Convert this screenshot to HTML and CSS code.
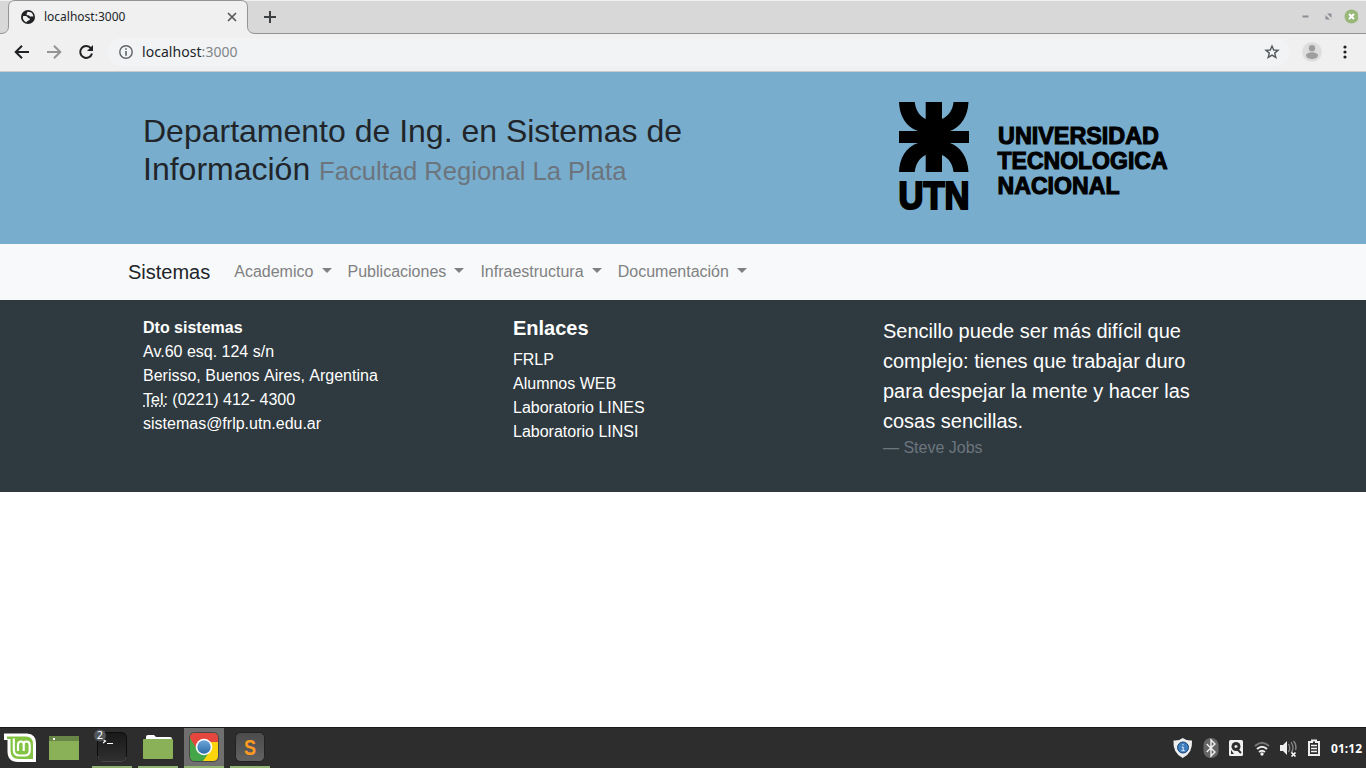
FILE: index.html
```html
<!DOCTYPE html>
<html lang="es">
<head>
<meta charset="utf-8">
<title>localhost:3000</title>
<link rel="stylesheet" href="styles.css">
</head>
<body>
<div class="browser">
  <div class="tabs">
    <svg class="tabshape" width="262" height="34" viewBox="0 0 262 34"><path d="M0 33.5C6 33.5 8.500 31 8.500 26V7Q8.500 .5 15 .5H241Q247.500 .5 247.500 7V26C247.500 31 250 33.500 256 33.500V34H0Z" fill="#f0f0f0"/><path d="M0 33.500C6 33.500 8.500 31 8.500 26V7Q8.500 .5 15 .5H241Q247.500 .5 247.500 7V26C247.500 31 250 33.500 256 33.500H262" fill="none" stroke="#949494"/></svg>
    <div class="tab">
      <svg width="14" height="14" viewBox="0 0 14 14"><circle cx="7" cy="7" r="7" fill="#202124"/><path d="M2 6.200C4 5.800 6 6 6.700 7.500C7 8.500 9 8 9 9.300C8 11 6 10.500 5.500 12.300C3.500 11.500 1.500 9.500 2 6.200ZM6.500 1.800L9.800 2.200C11.500 3 12.400 5 12.300 6.800L11 6.200L9.500 6.800L7.700 5.300L5.800 5.300L5.600 3.800Z" fill="#f0f0f0"/></svg>
      <span>localhost:3000</span>
      <svg class="close" width="10" height="10" viewBox="0 0 10 10"><path d="M1 1L9 9M9 1L1 9" stroke="#55585c" stroke-width="1.700"/></svg>
    </div>
    <svg class="plus" width="12" height="12" viewBox="0 0 12 12"><path d="M6 0V12M0 6H12" stroke="#3c4043" stroke-width="2"/></svg>
    <svg class="wincontrols" width="60" height="20" viewBox="0 0 60 20"><path d="M4.500 9.500H10.500" stroke="#8c8f96" stroke-width="2"/><path d="M29 6.500H33.500V11ZM27.500 8V12.500H32Z" fill="#8c8f96"/><path d="M27.500 6.500L33.500 12.500" stroke="#d8d8d8" stroke-width="1.200"/><circle cx="53.500" cy="9.500" r="7" fill="#97b878"/><path d="M51 7L56 12M56 7L51 12" stroke="#fff" stroke-width="2"/></svg>
  </div>
  <div class="toolbar">
    <svg class="navicons" width="94" height="24" viewBox="8 40 94 24"><g fill="none" stroke-width="2"><path d="M29 52H16M22 45.700L15.700 52L22 58.300" stroke="#202124"/><path d="M47 52H60M54 45.700L60.300 52L54 58.300" stroke="#949494"/><path d="M91 48.300A6 6 0 1 0 92 53.500" stroke="#202124"/></g><path d="M93 45V51H87Z" fill="#202124"/></svg>
    <div class="address">
      <svg width="14" height="14" viewBox="0 0 14 14"><circle cx="7" cy="7" r="6.200" fill="none" stroke="#5f6368" stroke-width="1.400"/><path d="M7 3.200V4.800M7 6V10.800" stroke="#5f6368" stroke-width="1.600"/></svg>
      <span class="host">localhost<span class="port">:3000</span></span>
      <svg class="star" width="16" height="16" viewBox="0 0 16 16"><path d="M8 2L9.700 6L14 6.300L10.700 9.100L11.800 13.400L8 11.100L4.200 13.400L5.300 9.100L2 6.300L6.300 6Z" fill="none" stroke="#55595e" stroke-width="1.400"/></svg>
    </div>
    <svg class="avatar" width="20" height="20" viewBox="0 0 20 20"><circle cx="10" cy="10" r="10" fill="#dedede"/><circle cx="10" cy="6.300" r="3.200" fill="#9e9e9e"/><ellipse cx="10" cy="13.600" rx="6" ry="3.300" fill="#9e9e9e"/></svg>
    <svg class="dots" width="4" height="14" viewBox="0 0 4 14"><g fill="#202124"><circle cx="2" cy="2" r="1.600"/><circle cx="2" cy="7" r="1.600"/><circle cx="2" cy="12" r="1.600"/></g></svg>
  </div>
</div>
<header class="masthead">
  <div class="container row">
    <div class="col-8"><h2>Departamento de Ing. en Sistemas de Información <small>Facultad Regional La Plata</small></h2></div>
    <div class="col-4">
      <svg class="logo" width="300" height="130" viewBox="883 90 300 130">
        <path d="M925.700 102H942V172H925.700ZM899 131H969V143H899Z"/>
        <path d="M899 102H914.700C915.500 109 919 116 925.700 119H942C949 116 953 109 953.500 102H968.500C968 116 961 127 950 131V143C961 147 968 158 968.500 172H953.500C953 165 949 158 942 155H925.700C919 158 915.500 165 914.700 172H899C899.500 158 906 147 918 143V131C906 127 899.500 116 899 102Z"/>
        <g class="logotext"><text class="utn" x="898.500" y="209" textLength="71" lengthAdjust="spacingAndGlyphs">UTN</text><text x="998" y="143.500" textLength="161" lengthAdjust="spacingAndGlyphs">UNIVERSIDAD</text><text x="997.500" y="168.500" textLength="170" lengthAdjust="spacingAndGlyphs">TECNOLOGICA</text><text x="997.500" y="193.500" textLength="122" lengthAdjust="spacingAndGlyphs">NACIONAL</text></g>
      </svg>
    </div>
  </div>
</header>
<nav class="navbar"><div class="container navrow"><a class="brand">Sistemas</a><a class="link">Academico</a><a class="link">Publicaciones</a><a class="link">Infraestructura</a><a class="link">Documentación</a></div></nav>
<footer class="footer">
  <div class="container row">
    <div class="col-4"><address><strong>Dto sistemas</strong><br>Av.60 esq. 124 s/n<br><span class="city">Berisso, Buenos Aires, Argentina</span><br><abbr title="Telefono">Tel:</abbr> (0221) 412- 4300<br>sistemas@frlp.utn.edu.ar</address></div>
    <div class="col-4"><h5>Enlaces</h5><ul><li>FRLP</li><li>Alumnos WEB</li><li>Laboratorio LINES</li><li>Laboratorio LINSI</li></ul></div>
    <div class="col-4"><blockquote><p>Sencillo puede ser más difícil que complejo: tienes que trabajar duro para despejar la mente y hacer las cosas sencillas.</p><cite>— Steve Jobs</cite></blockquote></div>
  </div>
</footer>
<div class="taskbar">
  <svg width="280" height="41" viewBox="0 727 280 41">
    <defs>
      <linearGradient id="dark" x2="0" y2="1"><stop stop-color="#191919"/><stop offset="1" stop-color="#303030"/></linearGradient>
      <linearGradient id="grey" x2="0" y2="1"><stop stop-color="#4b4b4b"/><stop offset="1" stop-color="#626262"/></linearGradient>
      <linearGradient id="blue" x2="0" y2="1"><stop stop-color="#6da6d9"/><stop offset="1" stop-color="#2d6ca9"/></linearGradient>
      <clipPath id="tile"><rect x="190" y="733" width="28" height="28" rx="4"/></clipPath>
    </defs>
    <path d="M4 733.500H27Q36 734 36 743V762H18Q7.500 762 7.500 751V740H4Z" fill="#fff"/>
    <path d="M7 736.500H26Q33 736.500 33 744V759H19Q10.500 759 10.500 750V739H7Z" fill="#82c341"/>
    <path d="M13.800 738.500V749.500Q13.800 755.500 19.500 755.500H24.500Q29.700 755.500 29.700 750.500V745.500Q29.700 741.500 26.300 741.500Q23.700 741.500 23.700 744.500Q23.700 741.500 21 741.500Q18 741.500 18 745V751M23.700 744V751" fill="none" stroke="#fff" stroke-width="2.200" class="mintline"/>
    <path d="M49 736H79V760H49Z" fill="#8ab158"/><path d="M49 736H79V741H49Z" fill="#678546"/><path d="M53 738H55V740H53Z" fill="#fff"/>
    <rect x="97.500" y="732.500" width="29" height="29" rx="5" fill="url(#dark)" stroke="#0c0c0c"/><path d="M98 756V757Q99 761.500 103 761.500H122Q126 761 126.500 757" fill="none" stroke="#484848"/><path d="M102 739L105.500 741L103 743M107 743.500H113" fill="none" stroke="#fff" stroke-width="1.200"/><circle cx="100" cy="735.500" r="6" fill="#50565b"/><text class="count" x="96.700" y="739">2</text>
    <path d="M146 741V737Q146 735 148 735H154L156 737H170Q172 737 172 739V743H146Z" fill="#fff"/><rect x="143" y="739" width="30" height="20" rx="1" fill="#8ab158"/>
    <path d="M184 728H224V766H184Z" fill="#6f6f6f"/>
    <g clip-path="url(#tile)"><path d="M190 733H218V761H190Z" fill="#fdd50c"/><path d="M190 733H218V742H204L197 751L190 739Z" fill="#e5473e"/><path d="M190 738L198 751L208 754L203 761H190Z" fill="#44a648"/></g><rect x="189.500" y="732.500" width="29" height="29" rx="5" fill="none" stroke="#474747"/><circle cx="204" cy="747" r="8.300" fill="#fff"/><circle cx="204" cy="747" r="6.700" fill="url(#blue)"/>
    <rect x="235.500" y="732.500" width="29" height="29" rx="5" fill="url(#grey)" stroke="#222"/><text class="sublime" x="244" y="755" textLength="12" lengthAdjust="spacingAndGlyphs">S</text>
    <path d="M92 766H132V768H92ZM138 766H178V768H138ZM184 766H224V768H184ZM230 766H270V768H230Z" fill="#92b372"/>
  </svg>
  <svg class="tray" width="206" height="41" viewBox="1160 727 206 41">
    <path d="M1182.700 738Q1187 741 1192 740.500Q1193 753 1182.700 758Q1172.500 753 1173.500 740.500Q1179 741 1182.700 738Z" fill="#eee"/><circle cx="1183" cy="747.500" r="5.500" fill="#3e7dbe" stroke="#194577"/><path d="M1183 744V745.300M1181.700 747H1183.200V750.700M1181.500 750.700H1184.800" fill="none" stroke="#e4edf7" stroke-width="1"/>
    <rect x="1203.500" y="738" width="15" height="20" rx="7" fill="#656565"/><path d="M1206.700 744L1215 752L1211 756V740L1215 744L1206.700 752" fill="none" stroke="#f1f1f1" stroke-width="1.400"/>
    <rect x="1229" y="740" width="14" height="16" rx="1.500" fill="#f1f1f1"/><circle cx="1236" cy="746.500" r="4.500" fill="#2d2d2d"/><circle cx="1236" cy="746.500" r="1.500" fill="#f1f1f1"/><path d="M1236 748L1241 753" stroke="#2d2d2d" stroke-width="2"/><path d="M1231 750L1234 754H1231Z" fill="#2d2d2d"/>
    <g fill="none" stroke-width="2"><path d="M1255 746Q1262 739.500 1269 746" stroke="#777"/><path d="M1257 749Q1262 744.500 1267 749" stroke="#eee"/><path d="M1259 752Q1262 749.500 1265 752" stroke="#eee"/></g><circle cx="1262" cy="754" r="1.700" fill="#eee"/>
    <path d="M1280 745H1283L1287 741V755L1283 751H1280Z" fill="#eee"/><path d="M1288.500 744Q1291 748 1288.500 752M1291 742Q1295 748 1291 753M1293.500 741Q1297 745 1295.500 750" fill="none" stroke="#888" stroke-width="1.300"/><path d="M1291.500 752.500L1295.500 756.500M1295.500 752.500L1291.500 756.500" stroke="#fff" stroke-width="1.700"/>
    <path d="M1309 742H1312V740.500H1316V742H1319V755H1309Z" fill="none" stroke="#eee" stroke-width="2"/><path d="M1311 745.500H1317M1311 748.500H1317M1311 751.500H1317" stroke="#eee" stroke-width="1.300"/>
    <text class="clock" x="1331" y="752.500" textLength="31">01:12</text>
  </svg>
</div>
</body>
</html>
```
FILE: styles.css
```css
* { box-sizing: border-box; }
body { margin: 0; height: 768px; display: flex; flex-direction: column; overflow: hidden; background: #fff; color: #212529; font: 16px/24px "Liberation Sans", Arial, sans-serif; }
svg { display: block; flex: none; }
.browser { height: 72px; flex: none; font-family: "Noto Sans", sans-serif; }
.tabs { height: 34px; background: #d8d8d8; border-top: 1px solid #f0f0f0; border-bottom: 1px solid #949494; display: flex; align-items: center; position: relative; }
.tabshape { position: absolute; left: 0; top: -1px; }
.tab { position: relative; width: 237px; padding-left: 21px; display: flex; align-items: center; font-size: 12px; line-height: 16px; }
.tab span { margin-left: 9px; }
.close { margin-left: auto; }
.plus { margin-left: 27px; }
.wincontrols { margin-left: auto; margin-right: 8px; }
.toolbar { height: 38px; padding-bottom: 1px; background: #f0f0f0; border-bottom: 1px solid #c8ccce; display: flex; align-items: center; }
.navicons { margin-left: 8px; }
.address { height: 28px; width: 1182px; margin-left: 6px; border-radius: 14px; background: #f1f3f4; display: flex; align-items: center; padding: 0 10px 0 11px; }
.host { margin-left: 9px; font-size: 14px; line-height: 20px; letter-spacing: .05px; }
.port { color: #80868b; }
.star { margin-left: auto; }
.avatar { margin-left: 12px; }
.dots { margin-left: 20.500px; }
.masthead { height: 172px; flex: none; background: #78adcd; }
.container { width: 1110px; margin-left: 128px; }
.row { display: flex; }
.col-8 { width: 740px; padding: 0 15px; }
.col-4 { width: 370px; padding: 0 15px; }
h2 { width: 600px; margin: 40px 0 0; font-size: 32px; font-weight: 400; line-height: 38.4px; }
h2 small { font-size: 25.6px; color: #6c757d; }
.logo { margin-top: 18px; }
.logotext { font: bold 24px "Liberation Sans", Arial, sans-serif; stroke: #000; stroke-width: 1.1; }
.utn { font-size: 39.500px; stroke-width: 2.2; }
.navbar { height: 56px; flex: none; background: #f8f9fa; }
.navrow { display: flex; align-items: center; height: 56px; }
.brand { font-size: 20px; line-height: 30px; margin-right: 16px; }
.link { padding: 0 8px; color: #808182; }
.link::after { content: ""; display: inline-block; margin-left: 8.150px; vertical-align: 4px; border-top: 5px solid; border-left: 5px solid transparent; border-right: 5px solid transparent; }
.footer { height: 192px; flex: none; padding-top: 16px; background: #2f3a40; color: #fff; }
address { font-style: normal; }
.city { font-kerning: none; }
abbr { text-decoration: underline dotted; }
h5 { margin: 0 0 8px; font-size: 20px; line-height: 24px; }
ul { margin: 0; padding: 0; list-style: none; }
blockquote { margin: 0; }
blockquote p { margin: 0; font-size: 20px; line-height: 30px; }
cite { display: block; color: #6c757d; font-style: normal; }
.taskbar { height: 41px; flex: none; margin-top: auto; background: #2d2d2d; display: flex; box-shadow: inset 0 1px #1b1b1b; }
.tray { margin-left: auto; }
.mintline { stroke-linejoin: round; }
.count { font: 11px "Noto Sans", sans-serif; fill: #fff; }
.sublime { font: bold 22px "Liberation Sans", sans-serif; fill: #ff9b22; }
.clock { font: bold 12px "Noto Sans", sans-serif; fill: #fff; }
```
